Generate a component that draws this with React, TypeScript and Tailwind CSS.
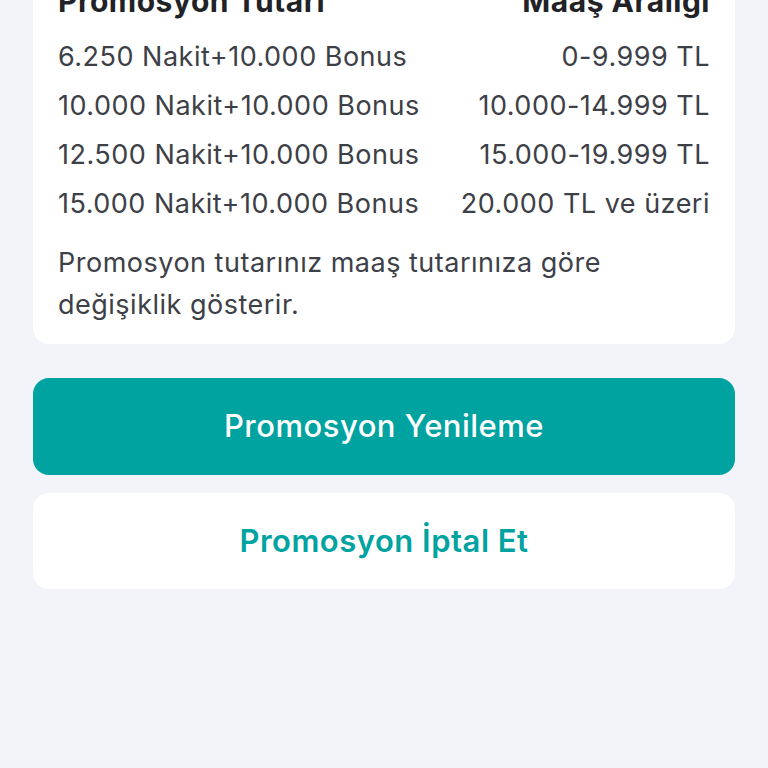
const rows = [
  { amount: '6.250 Nakit+10.000 Bonus', range: '0-9.999 TL' },
  { amount: '10.000 Nakit+10.000 Bonus', range: '10.000-14.999 TL' },
  { amount: '12.500 Nakit+10.000 Bonus', range: '15.000-19.999 TL' },
  { amount: '15.000 Nakit+10.000 Bonus', range: '20.000 TL ve üzeri' },
];

export default function App() {
  return (
    <div className="h-[768px] w-[768px] overflow-hidden bg-[#f2f4f9] px-[33px] font-['Inter',sans-serif] tracking-[0.5px]">
      {/* table card, scrolled so the header is half off screen */}
      <div className="-mt-[23px] rounded-b-[16px] bg-white px-[25px] pb-[18px] text-[#3d4047]">
        <div className="flex h-[49px] items-center justify-between text-[30px] font-bold text-[#1f2227]">
          <span>Promosyon Tutarı</span>
          <span>Maaş Aralığı</span>
        </div>
        <div className="mt-[7px]">
          {rows.map((r) => (
            <div key={r.amount} className="flex h-[49px] items-center justify-between text-[27px]">
              <span>{r.amount}</span>
              <span>{r.range}</span>
            </div>
          ))}
        </div>
        <p className="mt-[13px] text-[27px] leading-[42px]">
          Promosyon tutarınız maaş tutarınıza göre
          <br />
          değişiklik gösterir.
        </p>
      </div>

      <button className="mt-[34px] flex h-[97px] w-full items-center justify-center rounded-[16px] bg-[#00a3a0] text-[31px] font-medium tracking-[0.5px] text-white">
        Promosyon Yenileme
      </button>
      <button className="mt-[18px] flex h-[96px] w-full items-center justify-center rounded-[16px] bg-white text-[31px] font-semibold tracking-[0.5px] text-[#00a3a0]">
        Promosyon İptal Et
      </button>
    </div>
  );
}
